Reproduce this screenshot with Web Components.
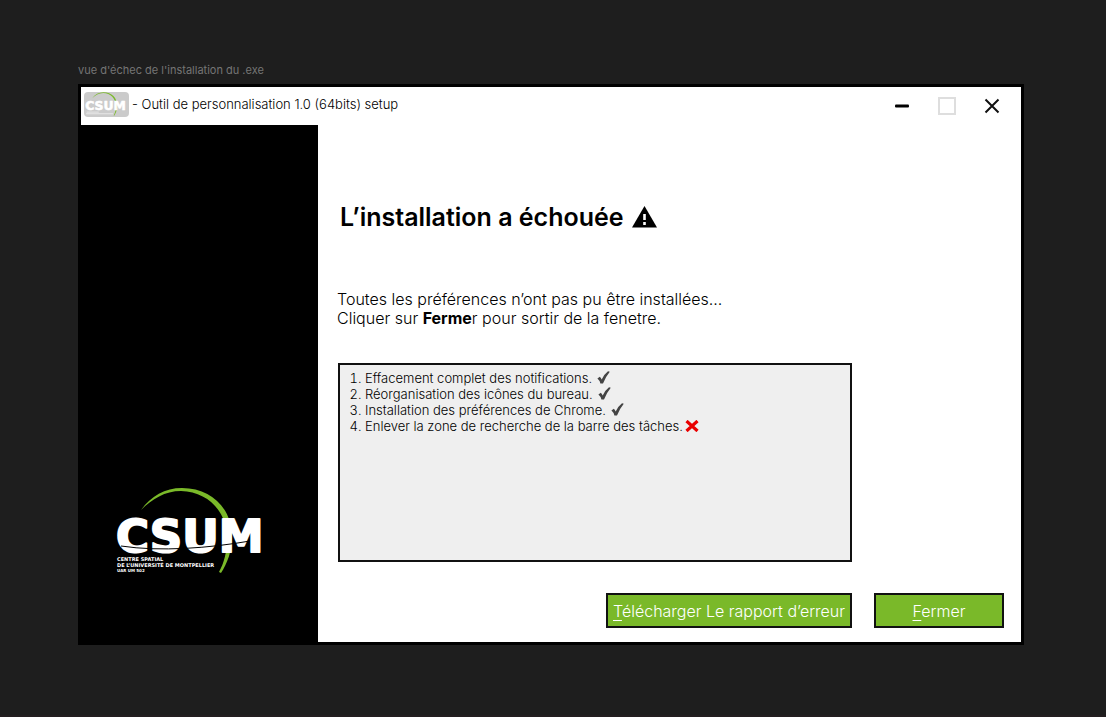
<!DOCTYPE html>
<html lang="fr">
<head>
<meta charset="utf-8">
<meta name="viewport" content="width=device-width, initial-scale=1">
<title>Outil de personnalisation 1.0 (64bits) setup</title>
<style>
  * { box-sizing: border-box; }
  body {
    margin: 0;
    min-height: 100vh;
    display: flex;
    background: #1e1e1e;
    border-bottom: 2px solid #231e20;
    color: #000;
    font-family: Inter, "Liberation Sans", sans-serif;
  }
  design-frame { flex: 1; }
  b { font-weight: 700; }
</style>
</head>
<body>
<design-frame label="vue d'échec de l'installation du .exe">
  <setup-window>
    <window-bar slot="bar">- Outil de personnalisation 1.0 (64bits) setup</window-bar>
    <csum-logo slot="side"></csum-logo>
    <failure-panel>
      <span slot="title">L’installation a échouée</span>
      <span slot="message">Toutes les préférences n’ont pas pu être installées...<br>Cliquer sur <b>Ferme</b>r pour sortir de la fenetre.</span>
      <step-log slot="log"></step-log>
      <action-button slot="actions" key="T" wide>élécharger Le rapport d’erreur</action-button>
      <action-button slot="actions" key="F">ermer</action-button>
    </failure-panel>
  </setup-window>
</design-frame>

<script>
  const define = (name, html, setup) => {
    const template = document.createElement('template');
    template.innerHTML = '<style>*{box-sizing:border-box}</style>' + html;
    customElements.define(name, class extends HTMLElement {
      constructor() {
        super();
        this.attachShadow({ mode: 'open' }).append(template.content.cloneNode(true));
      }
      connectedCallback() { if (setup) setup(this, this.shadowRoot); }
    });
  };

  define('design-frame', `
    <style>
      :host { display: flex; flex-direction: column; gap: 6px; padding: 62px 82px 70px 78px; }
      .label { font-size: 11px; line-height: 16px; color: #757575; }
      ::slotted(*) { flex: 1; }
    </style>
    <div class="label"></div>
    <slot></slot>`,
    (el, root) => { root.querySelector('.label').textContent = el.getAttribute('label'); });

  define('setup-window', `
    <style>
      :host { display: grid; grid-template: auto 1fr / 237px 1fr; border: 3px solid #000; background: #fff; }
      header { grid-column: 1 / -1; }
      aside { display: flex; align-items: flex-end; padding: 0 0 67px 34px; background: #000; }
      main { display: grid; }
    </style>
    <header><slot name="bar"></slot></header>
    <aside><slot name="side"></slot></aside>
    <main><slot></slot></main>`);

  define('window-bar', `
    <style>
      :host { display: flex; align-items: center; height: 38px; padding: 0 15px 0 3px; font-size: 13px; line-height: 16px; font-weight: 300; }
      .badge { display: flex; width: 45px; height: 25px; margin: 0 3px 3px 0; padding: 0 1px; border-radius: 4px; background: #cbcbcb; }
      .title { flex: 1; padding-bottom: 4px; }
      .controls { display: flex; gap: 16px; }
      button { display: flex; align-items: center; justify-content: center; width: 29px; height: 24px; padding: 0; border: 0; background: none; }
      svg { display: block; }
    </style>
    <span class="badge"><csum-logo compact></csum-logo></span>
    <span class="title"><slot></slot></span>
    <div class="controls">
      <button type="button" aria-label="Réduire"><svg width="14" height="4"><rect width="14" height="3" y="0.5" rx="1"/></svg></button>
      <button type="button" aria-label="Agrandir" disabled><svg width="18" height="18"><rect x="1" y="1" width="16" height="16" fill="none" stroke="#dedede" stroke-width="2"/></svg></button>
      <button type="button" aria-label="Fermer"><svg width="16" height="16"><path d="M1.5 1.5l13 13M14.5 1.5l-13 13" stroke="#111" stroke-width="2"/></svg></button>
    </div>`);

  define('csum-logo', `
    <style>
      :host { display: block; width: 156px; }
      :host([compact]) { width: 43px; }
      svg { display: block; width: 100%; height: auto; }
      :host([compact]) .small, :host([compact]) .cut { display: none; }
      .rule { display: none; }
      :host([compact]) .rule { display: inline; }
      text { font-family: "DejaVu Sans", sans-serif; fill: #fff; }
    </style>
    <svg viewBox="0 0 156 88" role="img" aria-label="CSUM">
      <path fill="#7ab929" d="M26 23C36 9 50 1 67 1C97 1 117 22 117 50C117 64 112 77 106 86L104 85C109 76 112 65 112 52C112 24 93 5 66 4C50 4 37 12 26 23Z"/>
      <text x="1" y="65" font-size="45" font-weight="700" stroke="#fff" stroke-width="2" stroke-linejoin="round">CSUM</text>
      <path class="cut" d="M6 59C45 65 95 61 135 54" fill="none" stroke="#000" stroke-width="1"/>
      <g class="small" font-weight="700">
        <text x="2" y="74" font-size="5">CENTRE SPATIAL</text>
        <text x="2" y="80" font-size="5">DE L’UNIVERSITÉ DE MONTPELLIER</text>
        <text x="2" y="85" font-size="4">UAR UM 502</text>
      </g>
      <path class="rule" d="M6 73h44M4 79h98" stroke="#fff" stroke-width="2"/>
    </svg>`);

  define('failure-panel', `
    <style>
      :host { display: flex; flex-direction: column; padding: 76px 17px 14px 19px; }
      h1 { display: flex; align-items: center; gap: 8px; margin: 0 0 57px; font-size: 25px; line-height: 32px; font-weight: 600; padding-left: 3px; }
      p { margin: 0 0 35px; font-size: 16px; line-height: 19px; font-weight: 300; }
      .log { flex: 1; display: grid; margin: 0 152px 31px 1px; }
      footer { display: flex; justify-content: flex-end; gap: 22px; }
    </style>
    <h1><slot name="title"></slot>
      <svg width="25" height="22" viewBox="0 0 25 22" aria-hidden="true"><path d="M12.5 0L25 21.5H0Z"/><path d="M12.5 8v6M12.5 16v3" stroke="#fff" stroke-width="2.6"/></svg>
    </h1>
    <p><slot name="message"></slot></p>
    <div class="log"><slot name="log"></slot></div>
    <footer><slot name="actions"></slot></footer>`);

  define('step-log', `
    <style>
      :host { display: block; border: 2px solid #111; background: #efefef; }
      ol { margin: 0; padding: 5px 8px 5px 25px; font-size: 13px; line-height: 16px; font-weight: 300; }
      svg { margin-left: 5px; vertical-align: -1px; }
      svg.no { margin-left: 2px; }
    </style>
    <ol></ol>`,
    (el, root) => {
      const yes = '<svg width="13" height="13" viewBox="0 0 13 13" role="img" aria-label="réussi"><path fill="#444" d="M0.4 7.6L2.8 5.8Q4 6.8 4.7 8.6Q7 3.3 11 0.3L12.8 0.7Q8.7 5.5 6 12.6H3.4Q2.5 9.2 0.4 7.6Z"/></svg>';
      const no = '<svg class="no" width="14" height="12" viewBox="0 0 14 12" role="img" aria-label="échec"><path d="M1.5 1L12.5 11M12.5 1L1.5 11" stroke="#e90000" stroke-width="3.2"/></svg>';
      const steps = [
        ['Effacement complet des notifications.', yes],
        ['Réorganisation des icônes du bureau.', yes],
        ['Installation des préférences de Chrome.', yes],
        ['Enlever la zone de recherche de la barre des tâches.', no]
      ];
      root.querySelector('ol').innerHTML = steps.map(([text, icon]) => '<li>' + text + icon + '</li>').join('');
    });

  define('action-button', `
    <style>
      :host { display: block; width: 130px; }
      :host([wide]) { width: 246px; }
      button { display: block; width: 100%; height: 35px; padding: 0; border: 2px solid #111; background: #7ab929; color: #fff; font: 300 16px/20px Inter, "Liberation Sans", sans-serif; white-space: nowrap; }
      u { text-decoration-thickness: 1px; text-underline-offset: 3px; }
    </style>
    <button type="button"><u></u><slot></slot></button>`,
    (el, root) => { root.querySelector('u').textContent = el.getAttribute('key'); });
</script>
</body>
</html>
